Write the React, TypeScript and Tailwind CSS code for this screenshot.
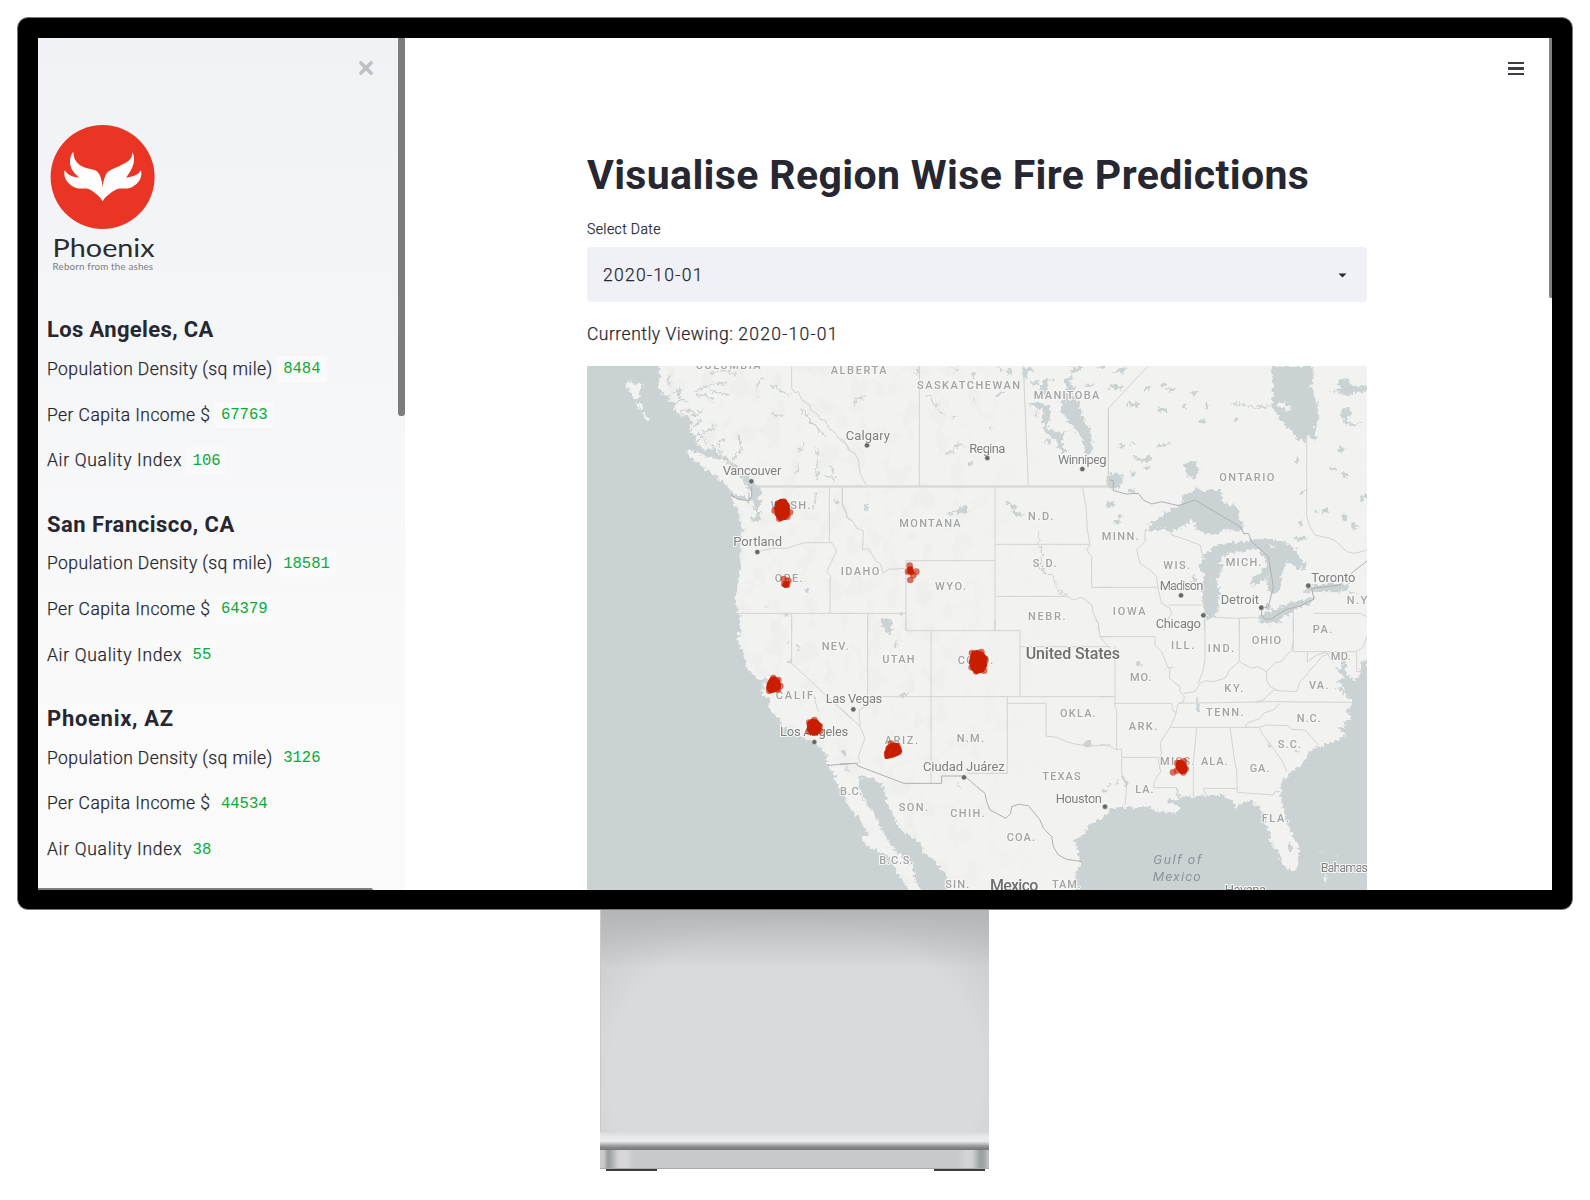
import React from "react";

type Origin = [number, number];

// The map is drawn in tiles; each tile has its own origin and a 1/3 scale.
const NW: Origin = [580, 360];
const N: Origin = [840, 360];
const NE: Origin = [1100, 360];
const SW: Origin = [580, 620];
const S: Origin = [840, 620];
const SE: Origin = [1100, 620];

const tile = (o: Origin) => `translate(${o[0]} ${o[1]}) scale(0.33333)`;

const WATER = "#cad2d3";
const LAND = "#f2f2f1";

const water: [Origin, string][] = [
  [NW, "M21 18H235L240 50 232 70 240 92 262 108 270 122 285 128 282 150 300 165 322 166 335 185 330 212 348 225 345 245 375 268 405 268 415 285 440 290 455 305 462 292 460 315 480 335 500 345 512 365 540 380 545 400 532 412 545 430 535 445 545 470 525 492 513 480 530 460 518 440 522 420 510 425 490 425 455 408 462 430 475 460 485 500 487 520 480 560 482 600 478 650 465 715 475 760 480 812H21Z"],
  [SW, "M21-10H480V30L472 60 490 95 500 140 530 178 560 178 562 190 545 185 555 210 542 205 550 225 568 240 565 265 600 300 605 315 640 340 680 360 720 380 740 405 745 435 760 460 770 490 790 520 805 560 835 590 855 625 870 650 840 645 860 680 890 690 925 710 945 745 965 780 990 812H21Z"],
  [S, "M50 468 100 475 130 500 140 545 150 560 165 600 180 630 220 655 245 670 250 700 280 720 300 745 320 765 318 790 330 812H245L225 780 215 735 165 690 150 670 130 640 110 590 85 560 60 520Z"],
  [S, "M705 812V770L725 725 715 700 705 660 735 640 745 615 780 600 795 590H830V812Z"],
  [SE, "M-5 602 25 580 30 565 75 560 110 565 150 558 165 575 200 575 230 580 240 560 205 548 208 535 235 545 245 530 290 528 330 525 360 525 390 535 405 560 450 540 475 560 495 590 495 610 510 640 512 670 540 700 545 730 575 755 595 740 597 680 575 640 555 590 540 530 545 490 570 455 600 440 640 385 690 370 740 345 710 325 740 318 730 305 760 290 735 275 750 262 755 240 725 215 700 200 735 205 710 180 735 175 700 140 725 150 725 120 738 125 735 160 765 180 780 160 785 130 801 115V812H-5Z"],
  [SE, "M480 0H545L530 8 500 12Z"],
  // Great Lakes
  [NE, "M135 512 160 485 200 455 245 435 250 405 275 395 290 380 300 390 330 390 362 390 370 430 415 440 415 470 425 490 430 495 435 520 400 510 370 512 340 525 315 520 285 500 280 480 300 475 270 485 240 505 205 515 190 505 160 510Z"],
  [NE, "M295 628 310 590 340 560 380 550 430 545 460 540 480 560 450 570 420 575 380 580 360 610 370 620 350 660 360 700 355 750 340 775 320 780 308 730 305 680 315 640Z"],
  [NE, "M450 540 500 537 555 545 590 570 600 595 620 615 615 630 590 625 560 600 545 640 540 690 520 705 505 690 500 650 480 665 455 675 455 655 480 640 500 610 495 590 465 565Z"],
  [NE, "M468 770 490 765 530 745 580 725 645 712 640 725 600 740 560 765 520 785 490 790Z"],
  [NE, "M610 690 640 675 700 670 745 672 745 690 710 697 640 695 610 700Z"],
  [NE, "M515 18H640L640 60 630 75 650 120 658 170 645 200 648 245 635 235 620 225 615 245 590 240 580 215 545 185 530 160 515 140 520 80Z"],
  [NE, "M690 95 720 85 715 65 735 55 760 80 801 78V95L760 100 740 108 720 98Z"],
  [NE, "M725 145 745 145 755 160 740 175 750 190 790 190 760 198 735 190 725 170Z"],
  [NE, "M255 310 285 303 297 325 290 355 270 355 255 335Z"],
  [NE, "M22 345 45 335 65 345 68 365 50 385 20 385Z"],
  [NE, "M100 285 115 292 135 298 150 280 155 300 130 310 105 295Z"],
  [NE, "M165 262 190 252 212 248 195 258 170 266Z"],
  [NE, "M780 410 801 395V415L785 422Z M583 535 625 533 622 540 590 542Z M600 480 608 490 598 505Z M595 390 620 392 610 400Z M28 72 68 78 66 88 30 86Z M82 122 100 130 120 130 118 138 85 140Z M35 40 70 22 82 18 70 38Z M20 435 45 422 40 438 25 445Z"],
  // Manitoba lakes
  [N, "M662 125 715 120 725 165 750 210 757 280 735 285 730 240 700 200 680 180 665 150Z"],
  [N, "M560 135 585 125 630 135 632 170 620 205 660 220 688 208 672 225 662 245 680 278 668 280 650 245 615 215 605 180 610 150 590 142Z"],
  [N, "M675 60 700 45 690 70 710 85 695 105 715 115 665 125 660 100 680 95Z M735 75 765 68 762 78 740 82Z M605 60 625 55 625 90 640 110 620 115 600 85Z M690 25 730 18 715 35 695 40Z M620 230 635 245 628 255 618 245Z M588 150 596 160 592 175 586 165Z"],
  [N, "M800 350 810 340V385H800Z M225 28 240 25 235 48Z M330 22 355 25 350 32Z M395 38 408 42 400 58Z M475 20 490 30 478 35Z M495 28 510 25 515 40 502 46Z M470 100 492 95 488 104 470 108Z M72 432 86 435 84 452 76 452Z M447 200 458 206 452 214Z"],
  [N, "M315 465 350 450 362 440 380 435 382 462 368 458 350 458 325 468Z"],
  [N, "M492 430 512 426 530 440 525 452 545 462 558 465 535 470 518 460 512 438Z"],
  [N, "M120 778 135 775 150 790 155 812H135Z"],
  [S, "M118 0 155 0 158 18 145 45 135 20Z M163 65 177 70 165 80Z M180 222 205 218 200 230 182 230Z M5 388 22 402 18 410 5 398Z M15 435 30 455 22 460Z M730 365 750 362 752 380 732 380Z M348 490 360 498 356 504Z"],
  [SW, "M627 122 636 125 634 135 627 132Z M645 68 658 80 656 92Z M617 66 629 68 627 74Z M785 388 802 402 798 410 788 402Z"],
  [NW, "M672 690 685 684 686 696 676 698Z M616 758 624 758 622 772 614 770Z M556 735 566 742 560 746Z M575 160 600 168 625 160 602 172 580 168Z M475 222 483 240 482 255 473 240Z"],
  [SE, "M285 228 295 240 300 275 290 272 292 250Z M500 365 518 382 515 388 502 375Z M580 388 595 392 590 400Z M560 675 572 668 580 685 570 692 562 685Z M65 465 85 485 80 505 70 490Z M22 488 35 490 30 498Z M5 510 28 508 25 516 8 518Z M45 480 62 490 52 492Z"],
];

const ponds: [Origin, number, number, number, number][] = [
  [NE, 215, 87, 15, 6], [NE, 140, 85, 9, 5], [NE, 190, 75, 6, 9], [NE, 282, 99, 13, 5], [NE, 185, 150, 16, 7], [NE, 252, 138, 7, 6], [NE, 320, 136, 6, 10], [NE, 303, 184, 13, 5], [NE, 404, 180, 5, 7], [NE, 143, 323, 10, 6], [NE, 98, 340, 8, 6], [NE, 68, 256, 11, 4], [NE, 95, 250, 9, 4], [NE, 592, 300, 4, 10], [NE, 698, 327, 13, 4], [NE, 735, 345, 9, 8], [NE, 723, 267, 9, 7], [NE, 675, 452, 10, 7], [NE, 650, 457, 5, 3], [NE, 733, 473, 9, 9], [NE, 762, 500, 8, 10], [NE, 50, 485, 9, 8], [NE, 95, 392, 10, 6], [NE, 60, 470, 5, 6], [NE, 755, 697, 12, 4], [NE, 282, 660, 5, 14], [NE, 502, 740, 10, 10],
  [N, 555, 38, 8, 16], [N, 585, 68, 12, 7], [N, 570, 28, 10, 5], [N, 390, 313, 7, 6], [N, 805, 435, 6, 10], [N, 760, 110, 5, 8], [N, 640, 60, 7, 4], [N, 185, 762, 4, 6], [N, 785, 22, 12, 4], [N, 400, 123, 7, 2],
  [NW, 692, 188, 8, 4], [NW, 770, 428, 7, 7],
];

const islands: [Origin, string][] = [
  [NW, "M318 280 325 270 345 275 380 290 420 295 445 310 455 325 485 350 500 380 512 405 500 415 480 405 465 405 445 380 415 355 385 335 350 305Z"],
  [NW, "M136 66 152 62 162 76 186 70 180 94 176 116 166 116 152 98Z"],
  [NW, "M166 122 186 134 190 148 176 146Z"],
  [NW, "M186 158 194 160 212 184 200 182Z"],
  [NW, "M252 70 262 95 248 82Z M285 90 295 110 280 105Z M500 398 508 388 512 400Z M420 325 440 338 430 340Z"],
  [NE, "M525 135 545 128 570 135 574 155 550 147Z"],
  [NE, "M510 555 530 558 528 565 512 563Z"],
  [N, "M630 140 660 150 668 185 690 205 655 220 635 195Z"],
  [SE, "M668 770 678 765 686 778 676 788Z M712 700 715 712 710 708Z M658 692 664 694 660 697Z"],
];

const inlets: [Origin, string][] = [
  [NW, "M342 95 365 85 400 70 445 72M345 105 375 105 400 122M385 85 415 100 450 105M390 40 430 30 470 45M270 75 262 62 270 45M300 80 295 110 325 130M262 108 280 100 305 92M285 128 310 120M300 165 310 145 335 150M320 150 345 165 370 152M345 195 370 180M350 225 400 205 410 190M348 245 365 235 360 220M380 255 375 235M420 280 415 250 432 235M405 268 395 250M460 300 470 280 495 265M540 55 532 80 533 112M548 55 555 60M570 75 600 90 630 110M664 147 690 180 735 230M655 275 675 250M652 308 655 325 648 345M707 262 715 290 708 330 715 360M735 345 755 355M755 315 758 345 764 362M705 395 708 420 698 445M483 255 478 270M590 330 585 345"],
  [N, "M40 135 55 115 75 110M260 100 285 135 300 155 315 165M335 175 348 175M316 280 340 278 355 250 370 262M597 513 597 550 605 580 598 625 640 650 655 690 680 709"],
  [NE, "M393 130 440 135 460 143 515 138"],
  [SE, "M110 132 120 125M110 128 125 134M195 148 215 140M230 510 240 540"],
];

const thinBorders: [Origin, string][] = [
  [NW, "M635 18V85L645 98 655 95 665 120 690 135 692 150 715 165 720 178 735 180 750 210 760 212 775 235 790 240 812 272M540 573 575 565 620 565 650 555 675 548H755M748 380V548M755 548 770 572 755 605 740 635 753 650 750 660V760M475 760H812M635 760V812M787 380V430L797 450 800 470 812 478"],
  [N, "M238 18V380M550 18 565 380M0 240 20 255 25 270 45 280 55 300 60 340 80 378M7 380V440L20 460 22 475 40 485 50 505 70 512 68 570 85 565 100 590 110 605 120 610 130 640 145 628 195 625M198 602V812M198 602H465M465 380V812M465 553H750M465 709H680L700 720 725 712 755 735 760 760 775 790V812M727 380 738 440 742 510 750 553 740 570 755 590V682H812M83 760V812M0 760H198M805 380V145"],
  [NE, "M25 380V145L70 98 105 60 145 18M135 512V545L110 570 120 610 150 630 170 650 175 690 185 730 210 745 215 760 200 785 190 812M205 735H305M0 682H175M240 435 230 465 205 490 215 525 260 540 300 555 310 595M345 772 410 775 470 772M418 775V812M620 225V470L630 500 645 525 690 535 710 545 740 575 765 580 801 570M580 750V812M640 760H780L801 770M313 775V812M360 585 335 620 325 740"],
  [SW, "M635 0V130L812 295M700 225 715 275"],
  [S, "M83 0V230M198 0V32H540V230M273 32V490M83 230H812M465 0V32M502 230V460H380M502 250H618V348L650 352 680 365 705 372 740 378 812 375M0 262 60 320 75 355 65 380 55 410 60 430M83 230 78 258 57 270 60 320M540 80H812M765 0 775 10 780 50H812M780 50 800 75 812 85"],
  [SE, "M315 0V120L308 155 295 190M418 0V125M580 0V95M580 95H770V155H788M770 95 790 80 801 50M580 60 575 90 555 110 545 125 525 128 500 155 475 140 455 145 418 125 390 148 375 175 340 185 315 182 300 190 285 215 250 220M0 50H165L165 75 185 95 200 135 210 150 208 175 240 200 240 215 253 230 250 245 235 250 225 290 210 322 195 345 180 370 185 400 175 420 182 455 165 480 160 500M235 250 520 245 750 247M45 80V265M0 230H45M45 250H215L218 272 230 278M50 265V390M0 373 30 378 45 388H65V412H175M65 412V460L80 500 75 555M210 322H475L500 315 565 317 575 328 615 330 655 375M478 322 485 340 510 370 530 400 548 425 560 455M290 322 280 430V530M390 322 405 430 410 450 412 515M310 505H410M310 505 318 525M412 517 520 525 525 515H540M160 503H230L235 535M437 322 440 310 480 295 490 280 520 270 540 250M465 247 490 240 520 210 535 212 590 215 600 185 620 165 630 150 650 130 665 110 690 100M500 155 500 180 510 200 535 212M622 97V125L650 105 680 97M680 97 700 130"],
];

const mainBorders: [Origin, string][] = [
  [NW, "M453 405 475 418 505 422 515 410 515 380"],
  [S, "M0 432 52 430V437L192 490H305V468H375L410 500 435 520 440 545 450 570 498 595 512 580 515 560 535 553 565 557 600 600 610 625 635 650 640 680 655 705 680 718 728 725"],
  [SW, "M745 436 812 431"],
  [NE, "M28 360 40 362 40 392 78 402 115 400 130 420 155 432 185 425 235 437 285 420 420 500 432 522 445 520 455 545 505 590 520 680 505 740 485 745 485 765 495 778 515 776 555 750 600 738 642 718 635 685 720 675 760 635 801 603"],
];

type Label = [Origin, string, number, number, number];

const regionLabels: Label[] = [
  [NW, "COLUMBIA", 347, 542, 26], [NW, "ALBERTA", 752, 920, 42], [N, "SASKATCHEWAN", 231, 540, 88], [N, "MANITOBA", 581, 778, 116],
  [NE, "ONTARIO", 358, 523, 363], [NW, "WASH.", 572, 692, 446], [NW, "ORE.", 584, 668, 667], [N, "IDAHO", 2, 118, 646],
  [N, "MONTANA", 178, 362, 500], [N, "WYO.", 285, 378, 691], [N, "N.D.", 564, 640, 479], [N, "S.D.", 578, 650, 621],
  [N, "NEBR.", 564, 677, 780], [NE, "MINN.", 5, 116, 539], [NE, "WIS.", 190, 270, 628], [NE, "MICH.", 377, 485, 617],
  [NE, "IOWA", 38, 137, 766], [NE, "N.Y.", 740, 812, 733], [SW, "NEV.", 725, 806, 90], [SW, "CALIF.", 587, 710, 236],
  [S, "UTAH", 127, 224, 129], [S, "COLO.", 353, 460, 132], [S, "ARIZ.", 134, 234, 371], [S, "N.M.", 350, 432, 365],
  [S, "OKLA.", 660, 767, 291], [S, "TEXAS", 607, 722, 479], [S, "SON.", 176, 264, 572], [S, "CHIH.", 331, 434, 592],
  [S, "COA.", 500, 585, 663], [S, "B.C.S.", 118, 220, 732], [S, "B.C.", 0, 68, 525], [S, "SIN.", 316, 388, 804], [S, "TAM.", 636, 722, 804],
  [SE, "MO.", 90, 155, 182], [SE, "ILL.", 213, 283, 87], [SE, "IND.", 323, 402, 97], [SE, "OHIO", 455, 543, 72],
  [SE, "PA.", 638, 697, 38], [SE, "MD.", 692, 752, 119], [SE, "VA.", 627, 685, 208], [SE, "KY.", 373, 430, 215],
  [SE, "TENN.", 318, 431, 288], [SE, "N.C.", 590, 662, 307], [SE, "S.C.", 533, 603, 384], [SE, "ARK.", 86, 172, 330],
  [SE, "MISS.", 180, 284, 434], [SE, "ALA.", 303, 383, 434], [SE, "GA.", 449, 508, 457], [SE, "LA.", 106, 161, 519], [SE, "FLA.", 485, 567, 607],
];

const cityLabels: Label[] = [
  [NW, "Vancouver", 428, 604, 346], [NW, "Portland", 460, 606, 558], [N, "Calgary", 17, 150, 240], [N, "Regina", 388, 496, 279],
  [N, "Winnipeg", 654, 800, 312], [NE, "Madison", 179, 310, 689], [NE, "Detroit", 362, 477, 733], [NE, "Chicago", 167, 303, 804],
  [NE, "Toronto", 634, 766, 665], [SW, "Las Vegas", 737, 907, 248], [SW, "Los Angeles", 600, 805, 349], [S, "Ciudad Juárez", 249, 494, 454],
  [S, "Houston", 647, 786, 549], [SE, "Bahamas", 662, 804, 757], [SE, "Havana", 374, 498, 823],
];

const countryLabels: Label[] = [
  [S, "United States", 557, 840, 117],
  [S, "Mexico", 450, 595, 812],
];

const seaLabels: Label[] = [
  [SE, "Gulf of", 160, 304, 731],
  [SE, "Mexico", 158, 302, 784],
];

const cityDots: [Origin, number, number][] = [
  [NW, 514, 364], [NW, 532, 576], [N, 81, 256], [N, 442, 294], [N, 727, 327], [NE, 243, 706], [NE, 484, 743], [NE, 310, 766],
  [NE, 625, 677], [S, 40, 268], [SW, 703, 366], [S, 372, 472], [S, 795, 560],
];

// Fire clusters: solid core plus the looser points around it.
const fires: { at: Origin; core: string; points: [number, number][] }[] = [
  { at: NW, core: "M588 428 600 418 618 420 628 435 628 465 618 478 598 482 586 465 584 445Z", points: [[584, 452], [630, 457], [598, 476], [611, 425], [595, 430], [622, 470]] },
  { at: NW, core: "M610 668 626 664 626 680 612 682 608 676Z", points: [[611, 657], [625, 662], [613, 672], [621, 674]] },
  { at: N, core: "M204 622 216 620 220 632 222 640 214 644 204 640Z", points: [[209, 617], [204, 635], [229, 635], [220, 646], [211, 660], [210, 630]] },
  { at: SW, core: "M570 175 582 170 596 178 602 195 598 210 584 216 568 218 560 205 562 190Z", points: [[580, 174], [601, 198], [568, 212], [594, 209], [595, 180]] },
  { at: SW, core: "M684 305 695 298 712 300 724 314 722 332 712 344 696 345 684 334 682 318Z", points: [[703, 300], [688, 308], [719, 318], [688, 335], [720, 333], [703, 338]] },
  { at: S, core: "M396 95 412 91 430 98 441 115 440 138 430 155 408 161 394 148 388 125Z", points: [[396, 99], [424, 96], [432, 152], [395, 142], [408, 154], [434, 116]] },
  { at: S, core: "M144 376 155 370 172 370 182 382 185 395 176 405 158 412 136 416 134 396Z", points: [[153, 371], [142, 406], [176, 395], [172, 378], [146, 385]] },
  { at: SE, core: "M232 422 245 420 256 428 262 445 258 458 244 462 232 450 228 436Z", points: [[219, 457], [231, 452], [232, 429], [252, 424], [257, 447], [250, 457], [236, 440]] },
];

function Labels({ items, className, size, halo }: { items: Label[]; className: string; size: number; halo: boolean }) {
  return (
    <g className={className} fontSize={size} stroke={halo ? "#f6f6f5" : "none"} strokeWidth={halo ? 2.2 : 0} strokeLinejoin="round" style={{ paintOrder: "stroke" }}>
      {items.map(([o, text, x1, x2, y]) => (
        <text key={text + x1} x={o[0] + x1 / 3} y={o[1] + y / 3} textLength={(x2 - x1) / 3}>
          {text}
        </text>
      ))}
    </g>
  );
}

function Shapes({ items }: { items: [Origin, string][] }) {
  return (
    <>
      {items.map(([o, d], i) => (
        <path key={i} transform={tile(o)} d={d} />
      ))}
    </>
  );
}

function FireMap() {
  return (
    <svg viewBox="587 366 780 524" className="block h-[524px] w-[780px] shrink-0">
      <defs>
        <filter id="coast" filterUnits="userSpaceOnUse" x="580" y="360" width="794" height="536">
          <feTurbulence type="fractalNoise" baseFrequency="0.28" numOctaves="2" seed="4" />
          <feDisplacementMap in="SourceGraphic" scale="8" xChannelSelector="R" yChannelSelector="G" />
        </filter>
        <filter id="relief" filterUnits="userSpaceOnUse" x="587" y="366" width="780" height="524">
          <feTurbulence type="fractalNoise" baseFrequency="0.06 0.045" numOctaves="4" seed="11" />
          <feColorMatrix values="0 0 0 0 0.8  0 0 0 0 0.8  0 0 0 0 0.79  8 0 0 0 -4.3" />
        </filter>
        <linearGradient id="reliefFade" x1="0" x2="1" y1="0" y2="0">
          <stop offset="0.1" stopColor="#fff" />
          <stop offset="0.45" stopColor="#fff" stopOpacity="0.8" />
          <stop offset="0.58" stopColor="#fff" stopOpacity="0.12" />
        </linearGradient>
        <mask id="west">
          <rect x="587" y="366" width="780" height="524" fill="url(#reliefFade)" />
        </mask>
      </defs>
      <rect x="587" y="366" width="780" height="524" fill={LAND} />
      <g mask="url(#west)">
        <rect x="587" y="366" width="780" height="524" filter="url(#relief)" opacity="0.35" />
      </g>
      <g filter="url(#coast)">
        <rect x="570" y="350" width="55" height="560" fill={WATER} />
        <g fill={WATER}>
          <Shapes items={water} />
          {ponds.map(([o, x, y, rx, ry], i) => (
            <ellipse key={i} transform={tile(o)} cx={x} cy={y} rx={rx} ry={ry} />
          ))}
          <rect x="1364" y="665" width="20" height="240" />
          <rect x="1080" y="886" width="300" height="20" />
          <rect x="560" y="886" width="330" height="20" />
          <rect x="560" y="350" width="98" height="20" />
        </g>
        <g fill={LAND}>
          <Shapes items={islands} />
        </g>
        <g fill="none" stroke={WATER} strokeWidth="4.5" strokeLinejoin="round">
          <Shapes items={inlets} />
        </g>
      </g>
      <g fill="none" stroke="#d3d3d2" strokeWidth="3" strokeLinejoin="round">
        <Shapes items={thinBorders} />
      </g>
      <path d="M757 486.5H1108" stroke="#dadad9" strokeWidth="2.4" fill="none" />
      <g fill="none" stroke="#aeb1b1" strokeWidth="3" strokeLinejoin="round">
        <Shapes items={mainBorders} />
      </g>
      <Labels items={regionLabels} className="fill-[#a3a3a3] font-['Roboto'] font-medium" size={11} halo />
      <Labels items={cityLabels} className="fill-[#7f7f7f] font-['Roboto'] font-normal" size={13} halo />
      <Labels items={countryLabels} className="fill-[#6f6f6f] font-['Roboto'] font-medium" size={16} halo />
      <Labels items={seaLabels} className="fill-[#8a9899] font-['Roboto'] font-normal italic" size={13.5} halo={false} />
      {cityDots.map(([o, x, y], i) => (
        <circle key={i} cx={o[0] + x / 3} cy={o[1] + y / 3} r="2.6" fill="#666666" stroke="#f6f6f5" strokeWidth="0.5" />
      ))}
      {fires.map((f, i) => (
        <g key={i} transform={tile(f.at)} fill="#c81e00">
          {f.points.map(([x, y], j) => (
            <circle key={j} cx={x} cy={y} r="10" opacity="0.62" />
          ))}
          <path d={f.core} stroke="#c81e00" strokeWidth="3" strokeLinejoin="round" />
        </g>
      ))}
    </svg>
  );
}

function Logo() {
  return (
    <svg viewBox="47 120 112 156" className="ml-[9px] h-[156px] w-[112px] shrink-0">
      <circle cx="102.6" cy="177" r="52" fill="#ea3424" />
      <path
        transform="scale(0.33333)"
        fill="#fff"
        d="M308 604C300 590 285 577 268 568C250 562 232 572 213 556C198 544 190 530 194 510C202 524 214 531 238 533C218 516 206 500 211 474C213 464 217 458 220 456C221 478 230 490 246 499C262 508 282 506 293 516C302 526 306 542 308 562C310 542 314 526 323 516C336 506 352 502 370 492C388 484 398 472 397 456C403 466 403 480 401 490C396 508 388 520 378 533C398 531 414 526 423 511C427 528 420 546 404 556C388 572 368 562 350 568C332 577 316 590 308 604Z"
      />
      <text x="52.6" y="256.6" textLength="102" lengthAdjust="spacingAndGlyphs" fontSize="25" className="fill-[#2b2c2c] font-['Lato'] font-normal">
        Phoenix
      </text>
      <text x="52.6" y="270" textLength="100.5" fontSize="9.8" className="fill-[#7d7e81] font-['Lato'] font-normal">
        Reborn from the ashes
      </text>
    </svg>
  );
}

const regions = [
  { name: "Los Angeles, CA", tracking: "tracking-[0.35px]", density: "8484", income: "67763", aqi: "106" },
  { name: "San Francisco, CA", tracking: "tracking-[0.5px]", density: "18581", income: "64379", aqi: "55" },
  { name: "Phoenix, AZ", tracking: "tracking-[0.7px]", density: "3126", income: "44534", aqi: "38" },
];

function Stat({ label, value, tracking }: { label: string; value: string; tracking: string }) {
  return (
    <div className="flex h-[45.7px] items-center gap-[4px] text-[17.5px] whitespace-nowrap [-webkit-text-stroke:0.25px]">
      <span className={tracking}>{label}</span>
      <code className="flex h-[27px] items-center rounded-[4px] bg-[#fafafa] px-[6.5px] pt-[2px] font-['Liberation_Mono',monospace] text-[15.6px] text-[#09ab3b] [-webkit-text-stroke:0px]">
        {value}
      </code>
    </div>
  );
}

function Sidebar() {
  return (
    <aside className="relative flex h-full w-[367px] shrink-0 flex-col overflow-hidden bg-linear-to-b from-[#f0f2f6] to-[#fafafa] to-80%">
      <div className="flex h-[82px] shrink-0 justify-end pt-[23px] pr-[32px]">
        <svg viewBox="0 0 14 14" className="h-[14px] w-[14px]">
          <path d="M2 2L12 12M12 2L2 12" stroke="#bfc0c4" strokeWidth="3.6" strokeLinecap="round" />
        </svg>
      </div>
      <Logo />
      <div className="flex flex-col pt-[13px] pl-[9px]">
        {regions.map((r) => (
          <section key={r.name} className="pt-6">
            <h3 className="flex h-[33.3px] items-center text-[22px] font-bold whitespace-nowrap">
              <span className={r.tracking}>{r.name}</span>
            </h3>
            <Stat label="Population Density (sq mile)" value={r.density} tracking="tracking-[0.41px]" />
            <Stat label="Per Capita Income $" value={r.income} tracking="tracking-[0.43px]" />
            <Stat label="Air Quality Index" value={r.aqi} tracking="tracking-[0.68px]" />
          </section>
        ))}
      </div>
      <div className="absolute top-0 right-0 h-[378px] w-[7px] rounded-b-[3px] bg-[#7b7c7e]" />
      <div className="absolute bottom-0 left-0 h-[2px] w-[335px] rounded-tr-[2px] bg-[#7e7e7e]" />
    </aside>
  );
}

function Main() {
  return (
    <main className="relative h-full grow overflow-hidden bg-white">
      <div className="flex h-[110px] justify-end pt-[24px] pr-[28px]">
        <div className="flex h-[13px] w-[16px] flex-col justify-between">
          <span className="h-[2px] bg-[#3c3d47]" />
          <span className="h-[2.5px] bg-[#3c3d47]" />
          <span className="h-[2px] bg-[#3c3d47]" />
        </div>
      </div>
      <div className="ml-[182px] flex w-[780px] flex-col">
        <h1 className="flex h-[56px] items-center text-[41px] font-bold tracking-[0.36px] whitespace-nowrap">Visualise Region Wise Fire Predictions</h1>
        <label className="mt-[15px] flex h-[20px] items-center text-[14px] tracking-[0.4px] whitespace-nowrap [-webkit-text-stroke:0.25px]">Select Date</label>
        <div className="mt-[8px] flex h-[55px] items-center justify-between rounded-[4px] bg-[#f0f1f6] pt-[1px] pr-[20px] pl-[16px] text-[17.5px]">
          <span className="tracking-[1.3px] [-webkit-text-stroke:0.25px]">2020-10-01</span>
          <svg viewBox="0 0 9 5" className="h-[5px] w-[9px]">
            <path d="M0.5 0.5H8.5L4.5 4.5Z" fill="#262730" />
          </svg>
        </div>
        <p className="mt-[17px] mb-[17px] flex h-[30px] items-center text-[17.5px] whitespace-pre [-webkit-text-stroke:0.25px]">
          <span className="tracking-[0.5px]">Currently Viewing: </span>
          <span className="tracking-[1.3px]">2020-10-01</span>
        </p>
        <FireMap />
      </div>
      <div className="absolute top-0 right-0 h-[260px] w-[3px] rounded-bl-[2px] bg-[#828282]" />
    </main>
  );
}

function Stand() {
  return (
    <div className="ml-[600px] flex w-[389px] flex-col self-start">
      <div className="h-[222px] border-l border-[#c8c9ca] bg-[linear-gradient(to_bottom,#b4b5b7_0%,#b4b5b700_26%),radial-gradient(ellipse_70%_100%_at_50%_74%,#d9dadc_0%,#d9dadc_68%,#cdced0_88%,#bebfc1_110%)]" />
      <div className="h-[18px] bg-[linear-gradient(to_bottom,#d9dadb_0%,#e9eaea_30%,#e9eaea_52%,#c0c2c2_65%,#8c8e8f_82%,#737577_100%)]" />
      <div className="h-[19px] border-b border-[#a9aaab] bg-[linear-gradient(to_right,#cccdce_0,#c8caca_4px,#989d9e_8px,#a4a9aa_11px,#d2d4d6_18px,#d6d8da_26px,#c7c9ca_34px,#c7c9ca_357px,#d3d5d7_368px,#ccd0d1_373px,#9a9fa0_380px,#a0a5a6_384px,#c8c9ca_389px)]" />
      <div className="flex justify-between pr-[4px] pl-[6px]">
        <div className="h-[2px] w-[51px] bg-[#3c3d3f]" />
        <div className="h-[2px] w-[51px] bg-[#3c3d3f]" />
      </div>
    </div>
  );
}

export default function App() {
  return (
    <div className="flex h-[1200px] w-[1590px] flex-col overflow-hidden bg-white pt-[17px] font-['Roboto','Noto_Sans',sans-serif] font-light text-[#262730]">
      <div className="ml-[17px] flex h-[893px] w-[1556px] shrink-0 rounded-[11px] border border-[#777] bg-black pt-[20px] pl-[20px]">
        <div className="flex h-[852px] w-[1514px] overflow-hidden">
          <Sidebar />
          <Main />
        </div>
      </div>
      <Stand />
    </div>
  );
}
